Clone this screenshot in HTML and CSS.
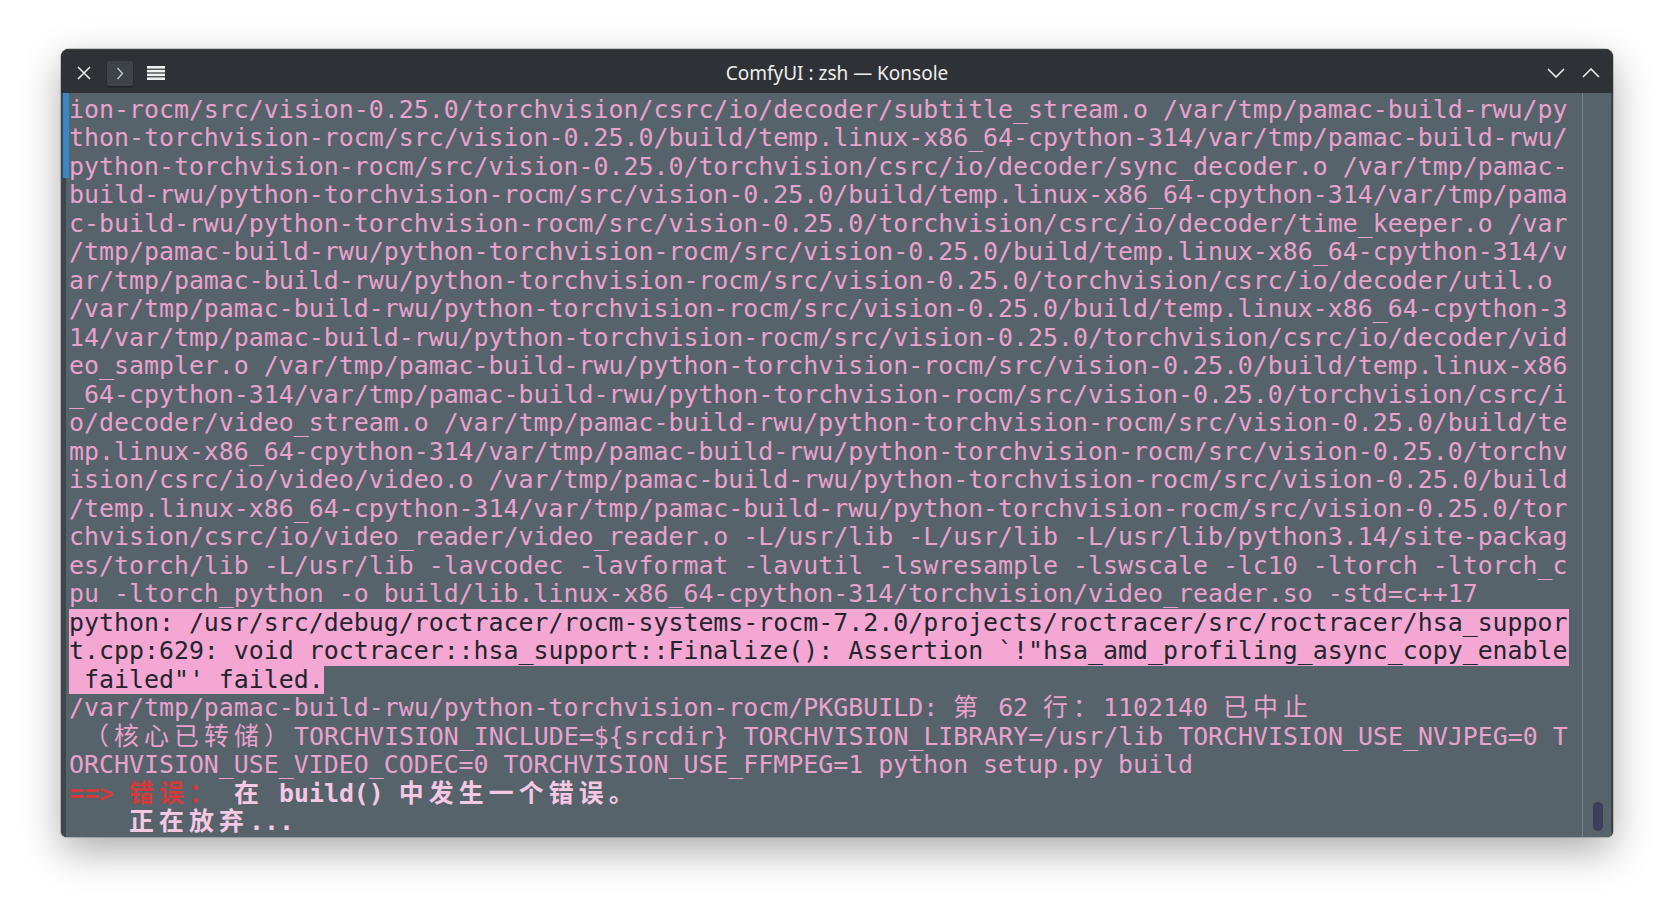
FILE: index.html
```html
<!DOCTYPE html>
<html lang="zh">
<head>
  <meta charset="UTF-8">
  <title>ComfyUI : zsh — Konsole</title>
  <link rel="stylesheet" href="styles.css">
</head>
<body>
  <div class="window">
    <div class="titlebar">
      <div class="tb-left">
        <svg class="ico-close" width="14" height="14" viewBox="0 0 14 14"><path d="M1 1L13 13M13 1L1 13" stroke="#ececec" stroke-width="1.6" fill="none"/></svg>
        <div class="tab-btn">
          <svg width="8" height="13" viewBox="0 0 8 13"><path d="M1.5 1L6.5 6.5L1.5 12" stroke="#c9cdd0" stroke-width="1.3" fill="none"/></svg>
        </div>
        <svg class="ico-menu" width="18" height="14" viewBox="0 0 18 14"><rect x="0" y="0" width="18" height="2.6" fill="#f0f0f0"/><rect x="0" y="3.8" width="18" height="2.6" fill="#f0f0f0"/><rect x="0" y="7.6" width="18" height="2.6" fill="#f0f0f0"/><rect x="0" y="11.4" width="18" height="2.6" fill="#f0f0f0"/></svg>
      </div>
      <div class="title">ComfyUI : zsh — Konsole</div>
      <div class="tb-right">
        <svg width="18" height="10" viewBox="0 0 18 10"><path d="M1 1L9 9L17 1" stroke="#ececec" stroke-width="1.6" fill="none"/></svg>
        <svg width="18" height="10" viewBox="0 0 18 10"><path d="M1 9L9 1L17 9" stroke="#ececec" stroke-width="1.6" fill="none"/></svg>
      </div>
    </div>
    <div class="term">
      <div class="gutter"><div class="marker"></div></div>
      <div class="screen">
        <div class="row">ion-rocm/src/vision-0.25.0/torchvision/csrc/io/decoder/subtitle_stream.o /var/tmp/pamac-build-rwu/py</div>
        <div class="row">thon-torchvision-rocm/src/vision-0.25.0/build/temp.linux-x86_64-cpython-314/var/tmp/pamac-build-rwu/</div>
        <div class="row">python-torchvision-rocm/src/vision-0.25.0/torchvision/csrc/io/decoder/sync_decoder.o /var/tmp/pamac-</div>
        <div class="row">build-rwu/python-torchvision-rocm/src/vision-0.25.0/build/temp.linux-x86_64-cpython-314/var/tmp/pama</div>
        <div class="row">c-build-rwu/python-torchvision-rocm/src/vision-0.25.0/torchvision/csrc/io/decoder/time_keeper.o /var</div>
        <div class="row">/tmp/pamac-build-rwu/python-torchvision-rocm/src/vision-0.25.0/build/temp.linux-x86_64-cpython-314/v</div>
        <div class="row">ar/tmp/pamac-build-rwu/python-torchvision-rocm/src/vision-0.25.0/torchvision/csrc/io/decoder/util.o</div>
        <div class="row">/var/tmp/pamac-build-rwu/python-torchvision-rocm/src/vision-0.25.0/build/temp.linux-x86_64-cpython-3</div>
        <div class="row">14/var/tmp/pamac-build-rwu/python-torchvision-rocm/src/vision-0.25.0/torchvision/csrc/io/decoder/vid</div>
        <div class="row">eo_sampler.o /var/tmp/pamac-build-rwu/python-torchvision-rocm/src/vision-0.25.0/build/temp.linux-x86</div>
        <div class="row">_64-cpython-314/var/tmp/pamac-build-rwu/python-torchvision-rocm/src/vision-0.25.0/torchvision/csrc/i</div>
        <div class="row">o/decoder/video_stream.o /var/tmp/pamac-build-rwu/python-torchvision-rocm/src/vision-0.25.0/build/te</div>
        <div class="row">mp.linux-x86_64-cpython-314/var/tmp/pamac-build-rwu/python-torchvision-rocm/src/vision-0.25.0/torchv</div>
        <div class="row">ision/csrc/io/video/video.o /var/tmp/pamac-build-rwu/python-torchvision-rocm/src/vision-0.25.0/build</div>
        <div class="row">/temp.linux-x86_64-cpython-314/var/tmp/pamac-build-rwu/python-torchvision-rocm/src/vision-0.25.0/tor</div>
        <div class="row">chvision/csrc/io/video_reader/video_reader.o -L/usr/lib -L/usr/lib -L/usr/lib/python3.14/site-packag</div>
        <div class="row">es/torch/lib -L/usr/lib -lavcodec -lavformat -lavutil -lswresample -lswscale -lc10 -ltorch -ltorch_c</div>
        <div class="row">pu -ltorch_python -o build/lib.linux-x86_64-cpython-314/torchvision/video_reader.so -std=c++17</div>
        <div class="row sel">python: /usr/src/debug/roctracer/rocm-systems-rocm-7.2.0/projects/roctracer/src/roctracer/hsa_suppor</div>
        <div class="row sel">t.cpp:629: void roctracer::hsa_support::Finalize(): Assertion `!"hsa_amd_profiling_async_copy_enable</div>
        <div class="row"><span class="hl"> failed"' failed.</span></div>
        <div class="row">/var/tmp/pamac-build-rwu/python-torchvision-rocm/PKGBUILD: <span class="w">第</span> 62 <span class="w">行</span><span class="w">：</span>1102140 <span class="w">已</span><span class="w">中</span><span class="w">止</span></div>
        <div class="row"> <span class="w">（</span><span class="w">核</span><span class="w">心</span><span class="w">已</span><span class="w">转</span><span class="w">储</span><span class="w">）</span>TORCHVISION_INCLUDE=${srcdir} TORCHVISION_LIBRARY=/usr/lib TORCHVISION_USE_NVJPEG=0 T</div>
        <div class="row">ORCHVISION_USE_VIDEO_CODEC=0 TORCHVISION_USE_FFMPEG=1 python setup.py build</div>
        <div class="row bold"><span class="red">==&gt; <span class="w">错</span><span class="w">误</span><span class="w">：</span></span> <span class="w">在</span> build() <span class="w">中</span><span class="w">发</span><span class="w">生</span><span class="w">一</span><span class="w">个</span><span class="w">错</span><span class="w">误</span><span class="w">。</span></div>
        <div class="row bold">    <span class="w">正</span><span class="w">在</span><span class="w">放</span><span class="w">弃</span>...</div>
      </div>
      <div class="spacer"></div>
      <div class="scrollbar"><div class="handle"></div></div>
    </div>
  </div>
</body>
</html>
```

FILE: styles.css
```css
*{margin:0;padding:0;box-sizing:border-box;}
html, body{background:#fff;}
body{padding:49px 0 0 61px;height:912px;overflow:hidden;}

.window{width:1552px;height:788px;display:flex;flex-direction:column;border-radius:8px 8px 6px 6px;overflow:hidden;box-shadow:0 14px 40px rgba(0,0,0,.33),0 0 0 1px rgba(0,0,0,.18);background:#2e3236;}

.titlebar{height:44px;flex:none;padding-top:3px;display:grid;grid-template-columns:1fr auto 1fr;align-items:center;background:#2e3236;border-top:1px solid #3a3f43;color:#ececec;}
.tb-left{display:flex;align-items:center;padding-left:16px;}
.tb-left .ico-close{margin-right:16px;}
.tab-btn{width:26px;height:25px;display:flex;align-items:center;justify-content:center;background:#3e4347;border-radius:2px;box-shadow:0 1px 2px rgba(0,0,0,.35);margin-right:14px;}
.title{font-family:"Noto Sans",sans-serif;font-size:19px;color:#eeeeee;}
.tb-right{display:flex;align-items:center;justify-content:flex-end;gap:17px;padding-right:13px;}

.term{flex:1;display:flex;background:#56636b;border-right:2px solid #3a4348;border-bottom:4px solid #3a4348;}
.gutter{width:8px;flex:none;background:linear-gradient(to right,#3d464b 0,#3d464b 5px,#56636b 5px);}
.marker{margin-left:2px;width:6px;height:85px;background:#3a87c6;}

.screen{width:1500px;flex:none;padding-top:2.5px;font-family:"DejaVu Sans Mono","Noto Sans CJK SC",monospace;font-size:24.9px;color:#e8a2cb;}
.row{height:28.5px;line-height:28.5px;white-space:pre;}
.row.sel{background:#f4a7d2;color:#22252e;}
.hl{display:inline-block;height:28.5px;background:#f4a7d2;color:#22252e;}
.w{display:inline-block;width:30px;text-align:left;}
.bold{font-weight:bold;color:#f5c8e3;}
.red{color:#d43a3a;}

.spacer{width:13px;flex:none;}
.scrollbar{flex:1;border-left:1px solid #74818a;display:flex;flex-direction:column;justify-content:flex-end;padding:0 0 6px 10px;}
.handle{width:10px;height:29px;border-radius:5px;background:#3b3f5a;}
```
